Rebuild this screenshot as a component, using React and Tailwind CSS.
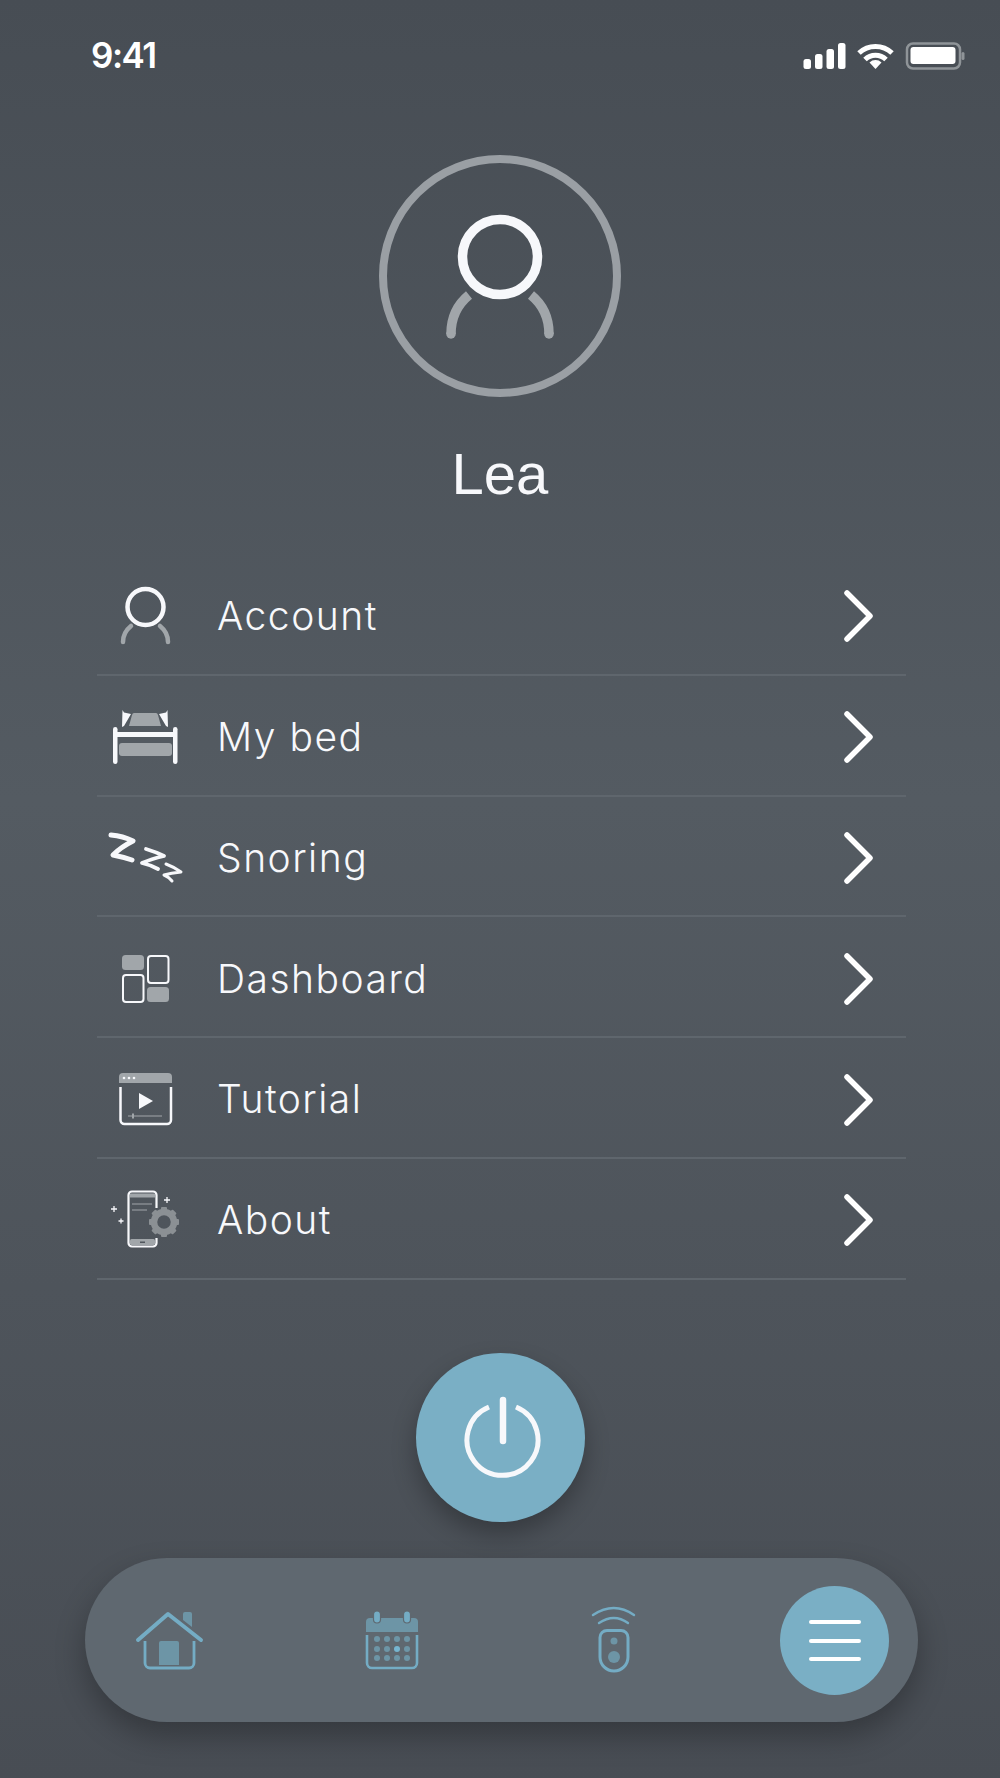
const grey = '#a1a6aa'
const white = '#f7f8fb'
const blue = '#74acc4'
const blueDim = '#6d95a6'

function StatusIcons() {
  return (
    <svg width="162" height="28" viewBox="0 0 162 28" fill="none">
      <rect x="0.5" y="17" width="7.5" height="10" rx="2.5" fill="#fff" />
      <rect x="12" y="12" width="7.5" height="15" rx="2.5" fill="#fff" />
      <rect x="23.5" y="7" width="7.5" height="20" rx="2.5" fill="#fff" />
      <rect x="35" y="1" width="7.5" height="26" rx="2.5" fill="#fff" />
      <path d="M56 11 A24 24 0 0 1 89 11" stroke="#fff" strokeWidth="5" />
      <path d="M62 17.5 A15 15 0 0 1 83 17.5" stroke="#fff" strokeWidth="5" />
      <path d="M72.5 27 L66.5 20.5 A8.5 8.5 0 0 1 78.5 20.5 Z" fill="#fff" />
      <rect x="104" y="1.5" width="53" height="25" rx="6" stroke="#8f9498" strokeWidth="2.5" />
      <rect x="107.5" y="5" width="45" height="17" rx="3" fill="#fff" />
      <rect x="158.5" y="10" width="3" height="8" rx="1.5" fill="#8f9498" />
    </svg>
  )
}

function AvatarIcon() {
  return (
    <svg width="110" height="130" viewBox="0 0 110 130" fill="none">
      <circle cx="55" cy="46" r="37.5" stroke={white} strokeWidth="9.5" />
      <path d="M6 123 C6 106 13 93 24 84" stroke={grey} strokeWidth="9.5" />
      <path d="M104 123 C104 106 97 93 86 84" stroke={grey} strokeWidth="9.5" />
      <circle cx="6" cy="123" r="4.75" fill={grey} />
      <circle cx="104" cy="123" r="4.75" fill={grey} />
    </svg>
  )
}

function AccountIcon() {
  return (
    <svg width="90" height="80" viewBox="0 0 90 80" fill="none">
      <circle cx="44.5" cy="31" r="18" stroke={white} strokeWidth="4.5" />
      <path d="M22 66 C22 59 25 54 30 50" stroke={grey} strokeWidth="4.5" strokeLinecap="round" />
      <path d="M67 66 C67 59 64 54 59 50" stroke={grey} strokeWidth="4.5" strokeLinecap="round" />
    </svg>
  )
}

function BedIcon() {
  return (
    <svg width="90" height="80" viewBox="0 0 90 80" fill="none">
      <rect x="12" y="30" width="4.5" height="37" rx="2.2" fill={white} />
      <rect x="72" y="30" width="4.5" height="37" rx="2.2" fill={white} />
      <rect x="14" y="35" width="60" height="5" fill={white} />
      <rect x="18" y="46" width="53" height="13" rx="3" fill={grey} />
      <path d="M33 16 H55 Q56.5 16 57 18 L60 29 H28 L31 18 Q31.5 16 33 16 Z" fill={grey} />
      <path d="M21.5 13 L23 15.5 L30 17 L23 29 L21 30 Z" fill={white} />
      <path d="M66.5 13 L65 15.5 L58 17 L65 29 L67 30 Z" fill={white} />
    </svg>
  )
}

function SnoringIcon() {
  return (
    <svg width="90" height="80" viewBox="0 0 90 80" fill="none" stroke={white} strokeLinecap="round" strokeLinejoin="round">
      <path d="M10 17 Q22 18 32 23 Q20 29 12 37 Q22 39 31 42" strokeWidth="5" />
      <path d="M45 31 Q55 34 63 38 Q50 41 41 45 Q50 47 57 51" strokeWidth="3.8" />
      <path d="M65 46 Q73 49 80 54 Q70 55 63 57 Q68 59 71 63" strokeWidth="3" />
    </svg>
  )
}

function DashboardIcon() {
  return (
    <svg width="90" height="80" viewBox="0 0 90 80" fill="none">
      <rect x="21" y="16" width="22" height="15" rx="3.5" fill={grey} />
      <rect x="47" y="17" width="20.5" height="27" rx="3" stroke={white} strokeWidth="2" />
      <rect x="22" y="36" width="20.5" height="27" rx="3" stroke={white} strokeWidth="2" />
      <rect x="46" y="48" width="22" height="15" rx="3.5" fill={grey} />
    </svg>
  )
}

function TutorialIcon() {
  return (
    <svg width="90" height="80" viewBox="0 0 90 80" fill="none">
      <path d="M18 23 V17 a4 4 0 0 1 4 -4 H67 a4 4 0 0 1 4 4 V23 Z" fill={grey} />
      <circle cx="23" cy="18" r="1.3" fill={white} />
      <circle cx="28" cy="18" r="1.3" fill={white} />
      <circle cx="33" cy="18" r="1.3" fill={white} />
      <path d="M19.5 27 V60 a4 4 0 0 0 4 4 H66 a4 4 0 0 0 4 -4 V27" stroke={white} strokeWidth="2.5" />
      <path d="M38 33 L52 41 L38 49 Z" fill={white} />
      <path d="M27 56 H61" stroke={grey} strokeWidth="1.2" />
      <path d="M32 53.5 V58.5" stroke={grey} strokeWidth="2" />
    </svg>
  )
}

function AboutIcon() {
  const teeth = [0, 45, 90, 135, 180, 225, 270, 315]
  return (
    <svg width="90" height="80" viewBox="0 0 90 80" fill="none">
      <path d="M55.5 28 V15 a3.5 3.5 0 0 0 -3.5 -3.5 H31 a3.5 3.5 0 0 0 -3.5 3.5 V63 a3.5 3.5 0 0 0 3.5 3.5 H52 a3.5 3.5 0 0 0 3.5 -3.5 V58" stroke={white} strokeWidth="2.2" />
      <rect x="29" y="13.5" width="25" height="4" fill={grey} />
      <path d="M31 24 H51 M31 30 H46" stroke={grey} strokeWidth="1.2" />
      <rect x="29" y="59" width="25" height="6" rx="1.5" fill={grey} />
      <rect x="39" y="61.5" width="5" height="1.5" fill="#50565d" />
      <circle cx="63" cy="42" r="10" stroke="#8b9094" strokeWidth="6.5" />
      {teeth.map((a) => (
        <rect key={a} x="60" y="27" width="6" height="6" rx="1" fill="#8b9094" transform={`rotate(${a} 63 42)`} />
      ))}
      <path d="M10 29 H16 M13 26 V32 M17.5 41 H22.5 M20 38.5 V43.5 M63 20 H69 M66 17 V23" stroke={white} strokeWidth="1.3" />
    </svg>
  )
}

function Chevron() {
  return (
    <svg width="30" height="52" viewBox="0 0 30 52" fill="none" className="ml-auto mr-[33px]">
      <path d="M4 3 L27 26 L4 49" stroke="#fff" strokeWidth="5.5" strokeLinecap="round" strokeLinejoin="round" />
    </svg>
  )
}

function PowerIcon() {
  return (
    <svg width="84" height="90" viewBox="0 0 84 90" fill="none">
      <path d="M55 15 A35.5 35.5 0 1 1 28 15" stroke={white} strokeWidth="5" />
      <path d="M42 8 V49" stroke={white} strokeWidth="6.5" strokeLinecap="round" />
    </svg>
  )
}

function HomeIcon() {
  return (
    <svg width="80" height="70" viewBox="0 0 80 70" fill="none" className="ml-[45px]">
      <path d="M53 9 a2 2 0 0 1 2 -2 H60 a2 2 0 0 1 2 2 V22 L53 15 Z" fill={blueDim} />
      <path d="M29 38 a2 2 0 0 1 2 -2 H47 a2 2 0 0 1 2 2 V60 H29 Z" fill={blueDim} />
      <path d="M15 36 V58 a5 5 0 0 0 5 5 H59 a5 5 0 0 0 5 -5 V36" stroke={blue} strokeWidth="2.8" />
      <path d="M8 35 L38 9 L71 35" stroke={blue} strokeWidth="4" strokeLinecap="round" strokeLinejoin="round" />
    </svg>
  )
}

function CalendarIcon() {
  const xs = [20, 30, 40, 50]
  const ys = [34, 44, 53]
  return (
    <svg width="70" height="70" viewBox="0 0 70 70" fill="none" className="ml-[147px]">
      <path d="M9 27 V17 a4 4 0 0 1 4 -4 H57 a4 4 0 0 1 4 4 V27 Z" fill={blueDim} />
      <rect x="16.5" y="6" width="7" height="12" rx="3.5" fill={blue} stroke="#5f6870" strokeWidth="1.2" />
      <rect x="46.5" y="6" width="7" height="12" rx="3.5" fill={blue} stroke="#5f6870" strokeWidth="1.2" />
      <path d="M10 30 V58 a5 5 0 0 0 5 5 H55 a5 5 0 0 0 5 -5 V30" stroke={blue} strokeWidth="2.6" />
      {ys.map((y) =>
        xs.map((x) => (
          <circle key={`${x}-${y}`} cx={x} cy={y} r="3" fill={x === 40 && y === 44 ? '#76b5d0' : blueDim} />
        ))
      )}
    </svg>
  )
}

function RemoteIcon() {
  return (
    <svg width="60" height="70" viewBox="0 0 60 70" fill="none" className="ml-[157px]">
      <path d="M9 10 Q30 -4 50 10" stroke={blue} strokeWidth="2.4" strokeLinecap="round" />
      <path d="M15 18 Q30 8 44 18" stroke={blue} strokeWidth="2.4" strokeLinecap="round" />
      <path d="M23 25.5 H37 a7 7 0 0 1 7 7 V52 a14 14 0 0 1 -28 0 V32.5 a7 7 0 0 1 7 -7 Z" stroke={blue} strokeWidth="3" />
      <circle cx="30" cy="36" r="3.5" fill={blueDim} />
      <circle cx="30" cy="52" r="6" fill={blueDim} />
    </svg>
  )
}

const rows = [
  { label: 'Account', icon: <AccountIcon /> },
  { label: 'My bed', icon: <BedIcon /> },
  { label: 'Snoring', icon: <SnoringIcon /> },
  { label: 'Dashboard', icon: <DashboardIcon /> },
  { label: 'Tutorial', icon: <TutorialIcon /> },
  { label: 'About', icon: <AboutIcon /> },
]

export default function App() {
  return (
    <div className="w-full h-[1778px] flex flex-col items-center overflow-hidden bg-gradient-to-b from-[#474d54] via-[#545b62] via-45% to-[#484d54] font-['Inter',sans-serif] text-white">
      <div className="w-full h-[110px] flex justify-between items-center pl-[91px] pr-[35px]">
        <span className="text-[35px] font-semibold tracking-[-1.5px]">9:41</span>
        <div className="pt-[2px]">
          <StatusIcons />
        </div>
      </div>

      <div className="mt-[45px] w-[242px] h-[242px] rounded-full border-[8px] border-[#9a9fa4] flex items-center justify-center">
        <AvatarIcon />
      </div>

      <div className="mt-[45px] mb-[49px] h-[64px] leading-[64px] text-[58px] font-['Liberation_Sans',sans-serif] text-[#f7f8fb]">Lea</div>

      <div className="w-full pl-[97px] pr-[94px]">
        {rows.map((row) => (
          <div key={row.label} className="h-[120.8px] pt-[4px] flex items-center border-b-2 border-[#5f666d]">
            <div className="ml-[4px] w-[90px] h-[80px]">{row.icon}</div>
            <span className="ml-[26px] text-[39px] font-light tracking-[1.5px] text-[#f7f8fb]">{row.label}</span>
            <Chevron />
          </div>
        ))}
      </div>

      <button className="mt-[73px] w-[169px] h-[169px] rounded-full bg-[#7aafc5] flex items-center justify-center pl-[6px] shadow-[0_12px_24px_rgba(0,0,0,0.28)]">
        <PowerIcon />
      </button>

      <div className="mt-[36px] ml-[3px] w-[833px] h-[164px] rounded-full bg-[#5f6870] flex items-center shadow-[0_14px_30px_rgba(0,0,0,0.28)]">
        <HomeIcon />
        <CalendarIcon />
        <RemoteIcon />
        <div className="ml-[136px] mt-[2px] w-[109px] h-[109px] rounded-full bg-[#7aafc5] flex flex-col items-center justify-center gap-[14.5px]">
          <div className="w-[52px] h-1 rounded-full bg-white" />
          <div className="w-[52px] h-1 rounded-full bg-white" />
          <div className="w-[52px] h-1 rounded-full bg-white" />
        </div>
      </div>
    </div>
  )
}
